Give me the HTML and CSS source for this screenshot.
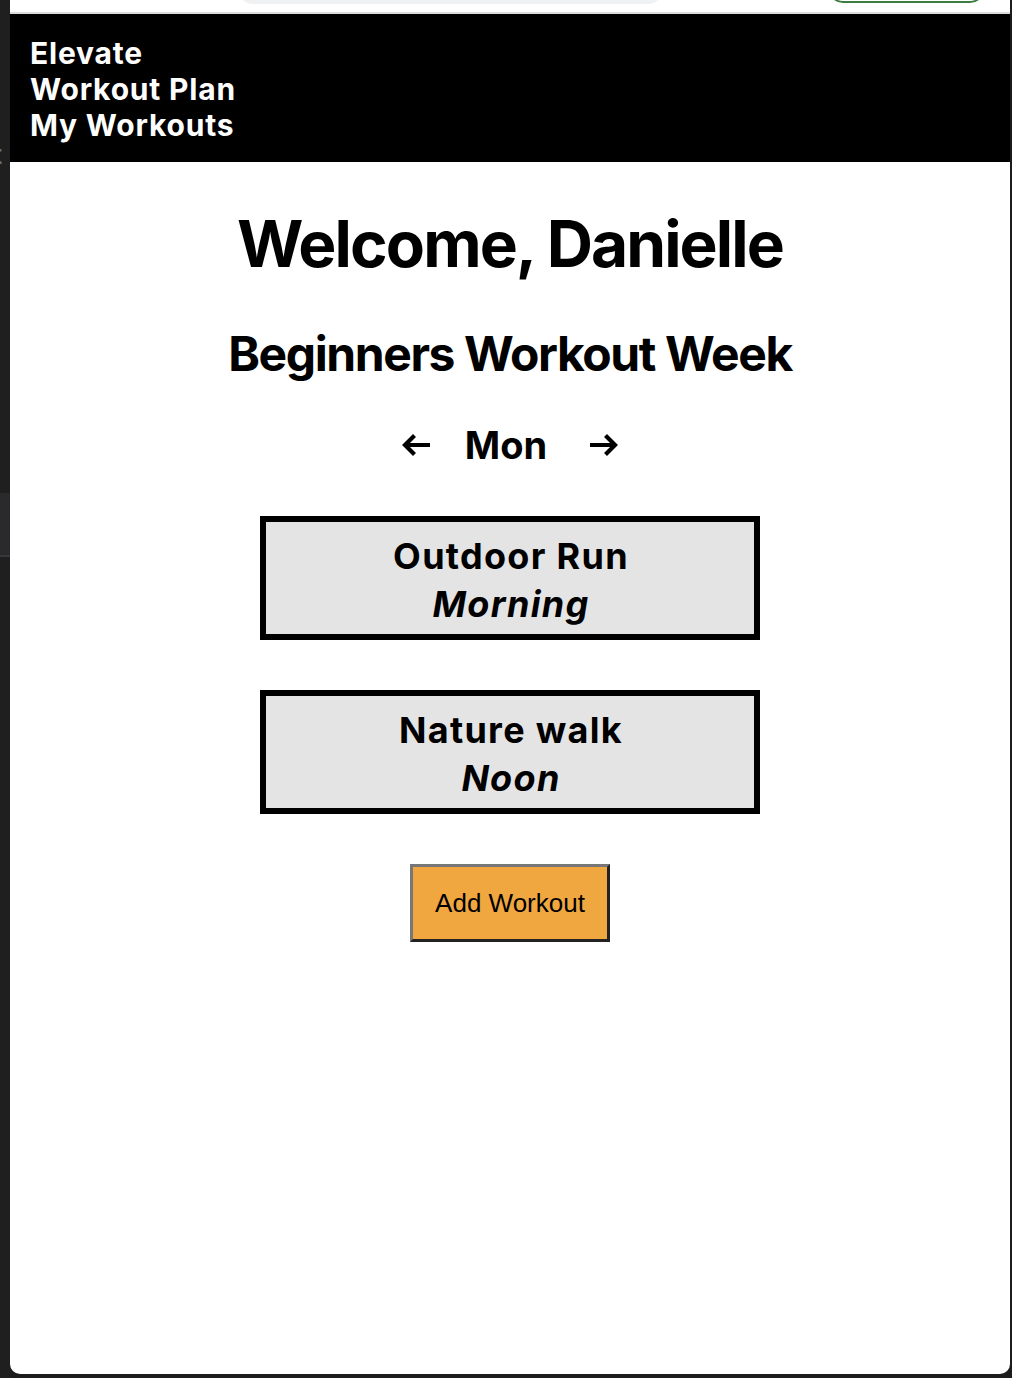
FILE: index.html
```html
<!DOCTYPE html>
<html lang="en">
<head>
<meta charset="utf-8">
<title>Elevate</title>
<link rel="stylesheet" href="styles.css">
</head>
<body>
<div class="desk">
  <aside class="side">
    <span class="side-letter">t</span>
    <div class="side-block"></div>
  </aside>
  <div class="window">
    <div class="topbar">
      <div class="search"></div>
      <div class="pill"></div>
    </div>
    <header class="header">
      <div class="brand">Elevate</div>
      <div class="nav-item">Workout Plan</div>
      <div class="nav-item">My Workouts</div>
    </header>
    <main class="content">
      <h1 class="welcome">Welcome, Danielle</h1>
      <h2 class="week">Beginners Workout Week</h2>
      <div class="day-nav">
        <svg class="arrow arrow-prev" width="30" height="26" viewBox="0 0 30 26" aria-hidden="true"><path d="M29 13H4M13.5 3.5L4 13l9.5 9.5" fill="none" stroke="#000" stroke-width="4.2" stroke-linecap="butt" stroke-linejoin="miter"/></svg>
        <span class="day">Mon</span>
        <svg class="arrow arrow-next" width="30" height="26" viewBox="0 0 30 26" aria-hidden="true"><path d="M1 13h25M16.5 3.5L26 13l-9.5 9.5" fill="none" stroke="#000" stroke-width="4.2" stroke-linecap="butt" stroke-linejoin="miter"/></svg>
      </div>
      <div class="card">
        <div class="card-title">Outdoor Run</div>
        <div class="card-time">Morning</div>
      </div>
      <div class="card">
        <div class="card-title">Nature walk</div>
        <div class="card-time">Noon</div>
      </div>
      <button class="add-btn" type="button">Add Workout</button>
    </main>
  </div>
</div>
</body>
</html>
```

FILE: styles.css
```css
html, body {
  margin: 0;
  padding: 0;
  background: #1c1c1c;
}

.desk {
  display: flex;
  width: 1012px;
  height: 1378px;
  overflow: hidden;
}

.side {
  width: 10px;
  flex: none;
  background: #1f1f20;
  overflow: hidden;
  display: flex;
  flex-direction: column;
}

.side-letter {
  display: block;
  margin-top: 138px;
  margin-left: -7px;
  font-family: "Inter", "Noto Sans", sans-serif;
  font-weight: 600;
  font-size: 26px;
  line-height: 34px;
  color: #6e6e70;
}

.side-block {
  margin-top: 321px;
  height: 62px;
  background: #2a2a2d;
  border-bottom: 2px solid #38383b;
}

.window {
  width: 1000px;
  height: 1374px;
  flex: none;
  background: #ffffff;
  border-radius: 0 0 10px 10px;
  overflow: hidden;
  display: flex;
  flex-direction: column;
}

.topbar {
  height: 12px;
  background: #ffffff;
  border-bottom: 2px solid #dcdcdf;
  display: flex;
  align-items: flex-end;
  overflow: hidden;
  flex: none;
}

.search {
  flex: none;
  width: 425px;
  height: 30px;
  margin-left: 228px;
  margin-bottom: 8px;
  background: #f0f1f3;
  border-radius: 16px;
}

.pill {
  flex: none;
  width: 157px;
  height: 30px;
  margin-left: 165px;
  margin-bottom: 9px;
  box-sizing: border-box;
  border: 2px solid #3b7d40;
  border-radius: 16px;
}

.header {
  background: #000000;
  color: #ffffff;
  padding: 21px 20px 19px;
  font-family: "Inter", "Noto Sans", sans-serif;
  font-weight: 700;
  font-size: 30px;
  line-height: 36px;
  letter-spacing: 0.8px;
  flex: none;
}

.content {
  display: flex;
  flex-direction: column;
  align-items: center;
  font-family: "Inter", "Noto Sans", sans-serif;
  color: #000000;
}

.welcome {
  margin: 42px 0 0;
  font-size: 64px;
  line-height: 80px;
  font-weight: 700;
  letter-spacing: -1.9px;
}

.week {
  margin: 40px 0 0;
  font-size: 48px;
  line-height: 60px;
  font-weight: 700;
  letter-spacing: -1.4px;
}

.day-nav {
  margin-top: 38px;
  display: flex;
  align-items: center;
}

.arrow {
  display: block;
  flex: none;
}

.day {
  margin: 0 42px 0 34px;
  font-size: 38px;
  line-height: 46px;
  font-weight: 700;
}

.card {
  box-sizing: border-box;
  width: 500px;
  margin-top: 48px;
  border: 6px solid #000000;
  background: #e4e4e4;
  padding: 10px 8px 6px 10px;
  text-align: center;
  font-size: 36px;
  line-height: 48px;
  font-weight: 700;
  letter-spacing: 1.3px;
}

.card + .card {
  margin-top: 50px;
}

.card-time {
  font-style: italic;
}

.add-btn {
  margin-top: 50px;
  width: 200px;
  height: 78px;
  box-sizing: border-box;
  background: #f1a73f;
  border-style: solid;
  border-width: 3px;
  border-color: #777777 #222222 #222222 #777777;
  border-radius: 0;
  font-family: "Liberation Sans", Arial, sans-serif;
  font-size: 26px;
  color: #000000;
  padding: 0;
}
```
